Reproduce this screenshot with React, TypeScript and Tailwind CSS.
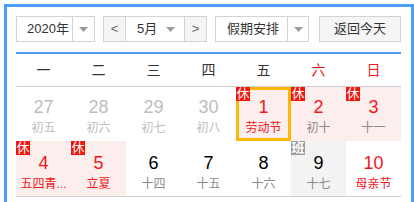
import React from "react";

const FONT = { fontFamily: '"Liberation Sans", "Noto Sans CJK SC", Arial, sans-serif' };

type Cell = {
  n: number;
  l: string;
  other?: boolean;
  rest?: boolean;
  work?: boolean;
  red?: boolean;
  fest?: boolean;
  sel?: boolean;
};

const rows: Cell[][] = [
  [
    { n: 27, l: "初五", other: true },
    { n: 28, l: "初六", other: true },
    { n: 29, l: "初七", other: true },
    { n: 30, l: "初八", other: true },
    { n: 1, l: "劳动节", rest: true, red: true, fest: true, sel: true },
    { n: 2, l: "初十", rest: true, red: true },
    { n: 3, l: "十一", rest: true, red: true },
  ],
  [
    { n: 4, l: "五四青年节", rest: true, red: true, fest: true },
    { n: 5, l: "立夏", rest: true, red: true, fest: true },
    { n: 6, l: "十四" },
    { n: 7, l: "十五" },
    { n: 8, l: "十六" },
    { n: 9, l: "十七", work: true },
    { n: 10, l: "母亲节", red: true, fest: true },
  ],
];

function Arrow() {
  return (
    <svg width="9" height="5" viewBox="0 0 9 5">
      <path d="M0 0h9L4.5 5z" fill="#9a9a9a" />
    </svg>
  );
}

function DayCell({ c, h }: { c: Cell; h: string }) {
  const bg = c.rest ? "bg-[#fdeeee]" : c.work ? "bg-[#f3f3f3]" : "bg-white";
  const numColor = c.other ? "text-[#bdbdbd]" : c.red ? "text-[#f01818]" : "text-black";
  const lunarColor = c.other ? "text-[#bdbdbd]" : c.fest ? "text-[#f01818]" : "text-[#8a8a8a]";
  return (
    <div className={`relative ${h} ${bg} flex flex-col items-center`}>
      {c.sel && <div className="absolute inset-0 border-[3px] border-[#fdb70d]" />}
      {c.rest && (
        <div className="absolute left-0 top-0 w-[14px] h-[14px] bg-[#f2150c] text-white text-[13px] leading-[14px] text-center">
          休
        </div>
      )}
      {c.work && (
        <div className="absolute left-0 top-0 w-[14px] h-[14px] bg-[#9a9a9a] text-white text-[13px] leading-[14px] text-center font-bold">
          班
        </div>
      )}
      <div className={`text-[18px] leading-[22px] ${numColor}`}>{c.n}</div>
      <div className={`text-[12px] leading-[16px] mt-[2px] ${lunarColor} max-w-[52px] truncate`}>
        {c.l.length > 4 ? c.l.slice(0, 3) + "..." : c.l}
      </div>
    </div>
  );
}

export default function App() {
  const week = ["一", "二", "三", "四", "五", "六", "日"];
  return (
    <div className="w-[414px] h-[202px] overflow-hidden bg-white" style={FONT}>
      <div className="ml-[4px] mt-[4px] w-[410px] h-[210px] border-[3px] border-[#4a9df5] pl-[9px] pt-[9px]">
        <div className="w-[385px]">
          <div className="flex h-[26px] text-[13px] text-[#333]">
            <div className="flex w-[79px] border border-[#d3d3d3] bg-white">
              <div className="w-[55px] flex items-center pl-[10px]">2020年</div>
              <div className="flex-1 flex items-center justify-center border-l border-[#d3d3d3]">
                <Arrow />
              </div>
            </div>
            <div className="flex ml-[8px] w-[104px] border border-[#d3d3d3]">
              <div className="w-[22px] flex items-center justify-center bg-[#f5f5f5] text-[#666] border-r border-[#d3d3d3]">&lt;</div>
              <div className="flex-1 flex items-center justify-between pl-[11px] pr-[9px] bg-white">
                <span>5月</span>
                <Arrow />
              </div>
              <div className="w-[22px] flex items-center justify-center bg-[#f5f5f5] text-[#666] border-l border-[#d3d3d3]">&gt;</div>
            </div>
            <div className="flex ml-[8px] w-[94px] border border-[#d3d3d3] bg-white">
              <div className="w-[71px] flex items-center pl-[11px]">假期安排</div>
              <div className="flex-1 flex items-center justify-center border-l border-[#d3d3d3]">
                <Arrow />
              </div>
            </div>
            <div className="ml-[10px] w-[82px] border border-[#d3d3d3] bg-[#f5f5f5] flex items-center justify-center">
              返回今天
            </div>
          </div>
          <div className="mt-[10px] h-[2px] bg-[#4a9df5]" />
          <div className="grid grid-cols-7 h-[33px] border-b border-[#cfcfcf] text-[14px] items-center text-center">
            {week.map((w, i) => (
              <div key={w} className={i >= 5 ? "text-[#f01818]" : "text-[#333]"}>
                {w}
              </div>
            ))}
          </div>
          <div className="grid grid-cols-7">
            {rows[0].map((c) => (
              <DayCell key={c.n} c={c} h="h-[54px] pt-[9px]" />
            ))}
          </div>
          <div className="grid grid-cols-7 border-b border-[#cfcfcf]">
            {rows[1].map((c) => (
              <DayCell key={c.n} c={c} h="h-[55px] pt-[11px]" />
            ))}
          </div>
        </div>
      </div>
    </div>
  );
}
